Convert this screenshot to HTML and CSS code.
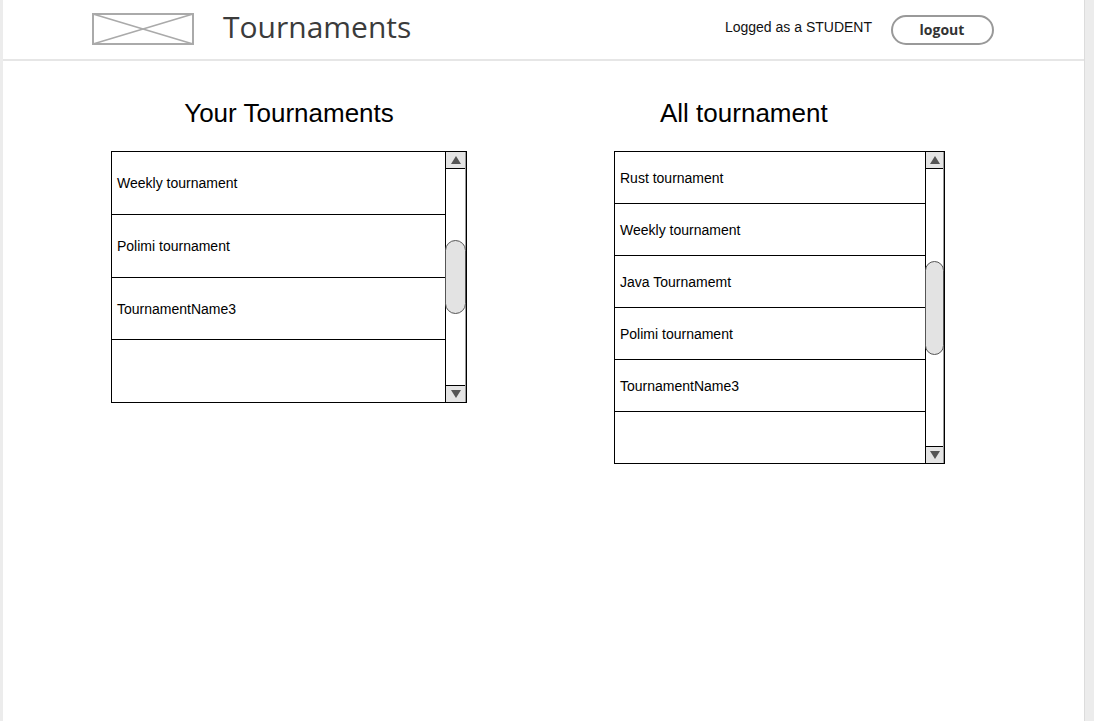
FILE: index.html
```html
<!DOCTYPE html>
<html lang="en">
<head>
<meta charset="utf-8">
<title>Tournaments</title>
<link rel="stylesheet" href="styles.css">
</head>
<body>
<div class="page">
  <header class="header">
    <div class="brand">
      <svg class="logo" width="102" height="32" viewBox="0 0 102 32">
        <rect x="1" y="1" width="100" height="30" fill="#fff" stroke="#aaa" stroke-width="2"/>
        <line x1="1" y1="1" x2="101" y2="31" stroke="#aaa" stroke-width="1.5"/>
        <line x1="101" y1="1" x2="1" y2="31" stroke="#aaa" stroke-width="1.5"/>
      </svg>
      <h1 class="title">Tournaments</h1>
    </div>
    <div class="user">
      <span class="logged">Logged as a STUDENT</span>
      <button class="logout">logout</button>
    </div>
  </header>
  <main class="content">
    <section class="col col-left">
      <h2 class="heading">Your Tournaments</h2>
      <div class="list list-left">
        <ul class="rows">
          <li class="row">Weekly tournament</li>
          <li class="row">Polimi tournament</li>
          <li class="row">TournamentName3</li>
          <li class="row"></li>
        </ul>
        <div class="scrollbar">
          <div class="arrow"><span class="tri-up"></span></div>
          <div class="track"><div class="thumb"></div></div>
          <div class="arrow arrow-down"><span class="tri-down"></span></div>
        </div>
      </div>
    </section>
    <section class="col col-right">
      <h2 class="heading">All tournament</h2>
      <div class="list list-right">
        <ul class="rows">
          <li class="row">Rust tournament</li>
          <li class="row">Weekly tournament</li>
          <li class="row">Java Tournamemt</li>
          <li class="row">Polimi tournament</li>
          <li class="row">TournamentName3</li>
          <li class="row"></li>
        </ul>
        <div class="scrollbar">
          <div class="arrow"><span class="tri-up"></span></div>
          <div class="track"><div class="thumb"></div></div>
          <div class="arrow arrow-down"><span class="tri-down"></span></div>
        </div>
      </div>
    </section>
  </main>
</div>
</body>
</html>
```

FILE: styles.css
```css
* { box-sizing: border-box; }

html, body {
  margin: 0;
  padding: 0;
  height: 100%;
}

body {
  background: #ececec;
  font-family: "Liberation Sans", Arial, sans-serif;
  color: #000;
  overflow: hidden;
}

.page {
  margin-left: 3px;
  width: 1082px;
  height: 721px;
  background: #fff;
  border-right: 1px solid #dcdcdc;
}

.header {
  height: 61px;
  border-bottom: 2px solid #e6e6e6;
  display: flex;
  align-items: flex-start;
  justify-content: space-between;
}

.brand {
  display: flex;
  align-items: flex-start;
  padding-left: 89px;
}

.logo {
  display: block;
  margin-top: 13px;
}

.title {
  margin: 6px 0 0 29px;
  font-family: "Open Sans", sans-serif;
  font-weight: 400;
  font-size: 30px;
  line-height: 42px;
  color: #3b3b3b;
}

.user {
  display: flex;
  align-items: flex-start;
  padding-right: 90px;
}

.logged {
  font-size: 14px;
  line-height: 16px;
  margin-top: 19px;
  color: #111;
}

.logout {
  margin: 15px 0 0 19px;
  width: 103px;
  height: 30px;
  border: 2px solid #999;
  border-radius: 15px;
  background: #fff;
  font-family: "Open Sans", sans-serif;
  font-weight: 700;
  font-size: 14px;
  color: #333;
  padding: 0 1px 1px 0;
}

.content {
  display: flex;
  align-items: flex-start;
  padding-top: 37px;
  padding-left: 108px;
}

.col {
  display: flex;
  flex-direction: column;
}

.col-left { width: 356px; }
.col-right { margin-left: 147px; }

.heading {
  margin: 0 0 23px 0;
  font-size: 26px;
  line-height: 30px;
  font-weight: 400;
  text-align: center;
}

.col-right .heading {
  text-align: left;
  padding-left: 46px;
}

.list {
  display: flex;
  border: 1px solid #000;
}

.list-left { width: 356px; height: 252px; }
.list-right { width: 331px; height: 313px; }

.rows {
  list-style: none;
  margin: 0;
  padding: 0;
  flex: 1;
  display: flex;
  flex-direction: column;
}

.row {
  flex: 1;
  display: flex;
  align-items: center;
  padding-left: 5px;
  font-size: 14px;
  border-bottom: 1px solid #000;
}

.row:last-child { border-bottom: none; }

.list-left .row { padding-top: 1px; }

.scrollbar {
  display: flex;
  flex-direction: column;
  border-left: 1px solid #000;
  border-right: 1px solid #999;
}

.list-left .scrollbar { width: 21px; }
.list-right .scrollbar { width: 19px; }

.arrow {
  height: 17px;
  background: #e4e4e4;
  border-bottom: 1px solid #000;
  display: flex;
  align-items: center;
  justify-content: center;
}

.arrow-down {
  border-bottom: none;
  border-top: 1px solid #000;
}

.tri-up, .tri-down {
  width: 0;
  height: 0;
  border-left: 5px solid transparent;
  border-right: 5px solid transparent;
}

.tri-up { border-bottom: 8px solid #555; }
.tri-down { border-top: 8px solid #555; }

.track {
  flex: 1;
  background: #fff;
}

.thumb {
  background: #e3e3e3;
  border: 1px solid #555;
  border-radius: 11px;
  margin-left: -1px;
  margin-right: -1px;
}

.list-left .thumb { margin-top: 71px; height: 74px; }
.list-right .thumb { margin-top: 92px; height: 94px; border-radius: 10px; }
```
